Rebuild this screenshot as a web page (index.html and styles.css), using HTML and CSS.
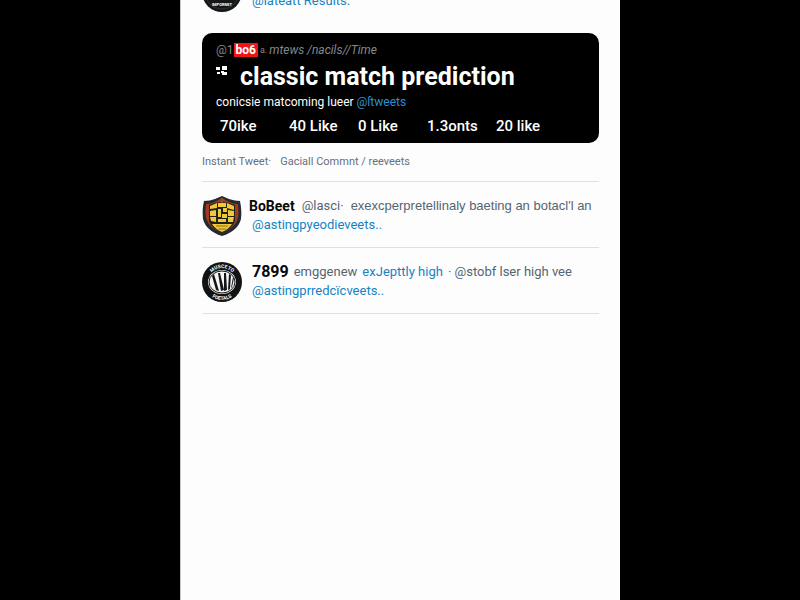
FILE: index.html
```html
<!DOCTYPE html>
<html lang="en">
<head>
    <meta charset="UTF-8">
    <meta name="viewport" content="width=device-width, initial-scale=1.0">
    <title>classic match prediction</title>
    <link rel="stylesheet" href="styles.css">
</head>
<body>
    <main class="feed">
        <article class="tweet first">
            <svg class="avatar" viewBox="0 0 40 40" aria-hidden="true">
                <circle cx="20" cy="20" r="20" fill="#151617"/>
                <circle cx="20" cy="20" r="17" fill="none" stroke="#303234"/>
                <text x="20" y="34" class="badge-text">IMPORNET</text>
            </svg>
            <div class="text">
                <p><a href="#">@lateatt Results.</a></p>
            </div>
        </article>

        <section class="card">
            <p class="source"><span>@1</span><strong class="tag">bo6</strong><small>a.</small><i>mtews /nacils//Time</i></p>
            <div class="title">
                <svg class="quote" viewBox="0 0 12 10" aria-hidden="true">
                    <path d="M0 1h4v3H0zM6 0h5v4H6zM1 6h3v2H1zM5 5h3v1h3v3H6V7H5z" fill="#fff"/>
                </svg>
                <h1>classic match prediction</h1>
            </div>
            <p class="desc">conicsie matcoming lueer <a href="#">@ſtweets</a></p>
            <ul class="stats">
                <li>70ike</li>
                <li>40 Like</li>
                <li>0 Like</li>
                <li>1.3onts</li>
                <li>20 like</li>
            </ul>
        </section>

        <p class="meta"><span>Instant Tweet·</span><span>Gaciall Commnt / reeveets</span></p>

        <article class="tweet">
            <svg class="avatar" viewBox="0 0 40 40" aria-hidden="true">
                <path d="M20 0l7 3q6 2 11 2 2 10 1 18-3 12-19 17Q4 35 1 23 0 13 2 5q6 0 11-2z" fill="#252a30"/>
                <path d="M20 2l7 4q5 2 9 2 1 8 0 14-3 10-16 15Q7 32 4 22 3 14 4 8q5 0 9-2z" fill="#a33a20"/>
                <path d="M7 9q13-6 26 0v16q-3 8-13 12Q10 33 7 25z" fill="#20221f"/>
                <path d="M8 10l7-3v5l-7 1zM16 7h8v4h-8zM25 7l7 3v4l-7-2zM8 15l6-1v6H8zM16 13h3v8h-3zM21 12h4v4h-4zM26 14l6 1v5h-6zM8 21h6v5l-5-1zM20 18h5v4h-5zM26 21h6l-1 5h-5zM16 23h8v3h-8zM10 28h20q-3 5-10 8-7-3-10-8z" fill="#f0c936"/>
                <path d="M20 2v5M14 30h12M16 33h8" stroke="#8b7220" fill="none"/>
            </svg>
            <div class="text">
                <p class="line"><b>BoBeet</b><span>@lasci·</span><span class="wide">exexcperpretellinaly baeting an botacl'l an</span></p>
                <p class="reply"><a href="#">@astingpyeodieveets..</a></p>
            </div>
        </article>

        <article class="tweet">
            <svg class="avatar" viewBox="0 0 40 40" aria-hidden="true">
                <defs>
                    <path id="top-arc" d="M6 20a14 14 0 0 1 28 0"/>
                    <path id="bottom-arc" d="M2 20a18 18 0 0 0 36 0"/>
                </defs>
                <circle cx="20" cy="20" r="20" fill="#111213"/>
                <text class="ring-text"><textPath href="#top-arc" startOffset="50%">MUSCETO</textPath></text>
                <text class="ring-text"><textPath href="#bottom-arc" startOffset="50%">FOETALS</textPath></text>
                <ellipse cx="20" cy="20" rx="14" ry="12" fill="#f5f5f5"/>
                <ellipse cx="20" cy="20" rx="13" ry="11" fill="none" stroke="#151617"/>
                <path d="M10 14l2-2 5 17-3-1zM16 11h2l4 17-3 1zM22 11h2l1 17-3 1zM27 12l2 1-1 14-2 1zM31 15l1 1-2 9-1 1z" fill="#151617"/>
            </svg>
            <div class="text">
                <p class="line tight"><b class="big">7899</b><span>emggenew</span><a href="#">exJepttly high</a><span>· @stobf lser high vee</span></p>
                <p class="reply"><a href="#">@astingprredcïcveets..</a></p>
            </div>
        </article>
    </main>
</body>
</html>
```
FILE: styles.css
```css
* {
    margin: 0;
    padding: 0;
    box-sizing: border-box;
}

body {
    background: #000;
    color: #566472;
    font-family: Roboto, "Liberation Sans", sans-serif;
    font-size: 13px;
    line-height: 20px;
}

a {
    color: #1583c4;
    text-decoration: none;
}

.feed {
    width: 55%;
    min-width: 440px;
    min-height: 100vh;
    margin: 0 auto;
    padding: 0 21px;
    border-left: 1px solid #c8c8c8;
    background: #fdfdfd;
    overflow: hidden;
}

.tweet {
    display: flex;
    gap: 7px;
    padding: 14px 0 11px;
    border-bottom: 1px solid #dde1e4;
    white-space: nowrap;
}

/* scrolled partly out of view */
.tweet.first {
    margin-top: -44px;
    padding: 16px 0 21px;
    border-bottom: 0;
}

.first .text {
    padding: 19px 0 0 3px;
}

.avatar {
    flex: none;
    width: 40px;
    height: 40px;
}

.badge-text {
    fill: #fff;
    font-size: 4px;
    font-weight: bold;
    text-anchor: middle;
}

.ring-text {
    fill: #fff;
    font-size: 5px;
    font-weight: bold;
    text-anchor: middle;
}

.card {
    padding: 7px 14px;
    border-radius: 10px;
    background: #000;
    color: #fff;
}

.source {
    display: flex;
    align-items: center;
    color: #85888b;
    font-size: 12px;
}

.tag {
    padding: 0 2px;
    background: #f01414;
    color: #fff;
    line-height: 14px;
}

.source small {
    margin: 0 2px;
    font-size: 9px;
}

.title {
    display: flex;
    gap: 12px;
}

.quote {
    width: 12px;
    height: 10px;
    margin-top: 6px;
}

h1 {
    font-size: 25px;
    line-height: 34px;
}

.desc {
    font-size: 12px;
    line-height: 16px;
}

.desc a {
    color: #2c91cf;
}

.stats {
    display: grid;
    grid-template-columns: repeat(5, 69px);
    padding: 6px 4px 0;
    list-style: none;
    font-size: 15px;
    font-weight: 500;
}

.meta {
    display: flex;
    gap: 9px;
    padding: 9px 0;
    border-bottom: 1px solid #dde1e4;
    color: #667080;
    font-size: 11px;
}

.line {
    display: flex;
    gap: 7px;
}

.line.tight {
    gap: 5px;
    padding-left: 3px;
}

.line b {
    color: #080808;
    font-size: 14px;
}

.line .big {
    font-size: 16px;
}

.wide {
    font-family: "Liberation Sans", sans-serif;
}

.reply {
    padding-left: 3px;
    line-height: 18px;
}
```
